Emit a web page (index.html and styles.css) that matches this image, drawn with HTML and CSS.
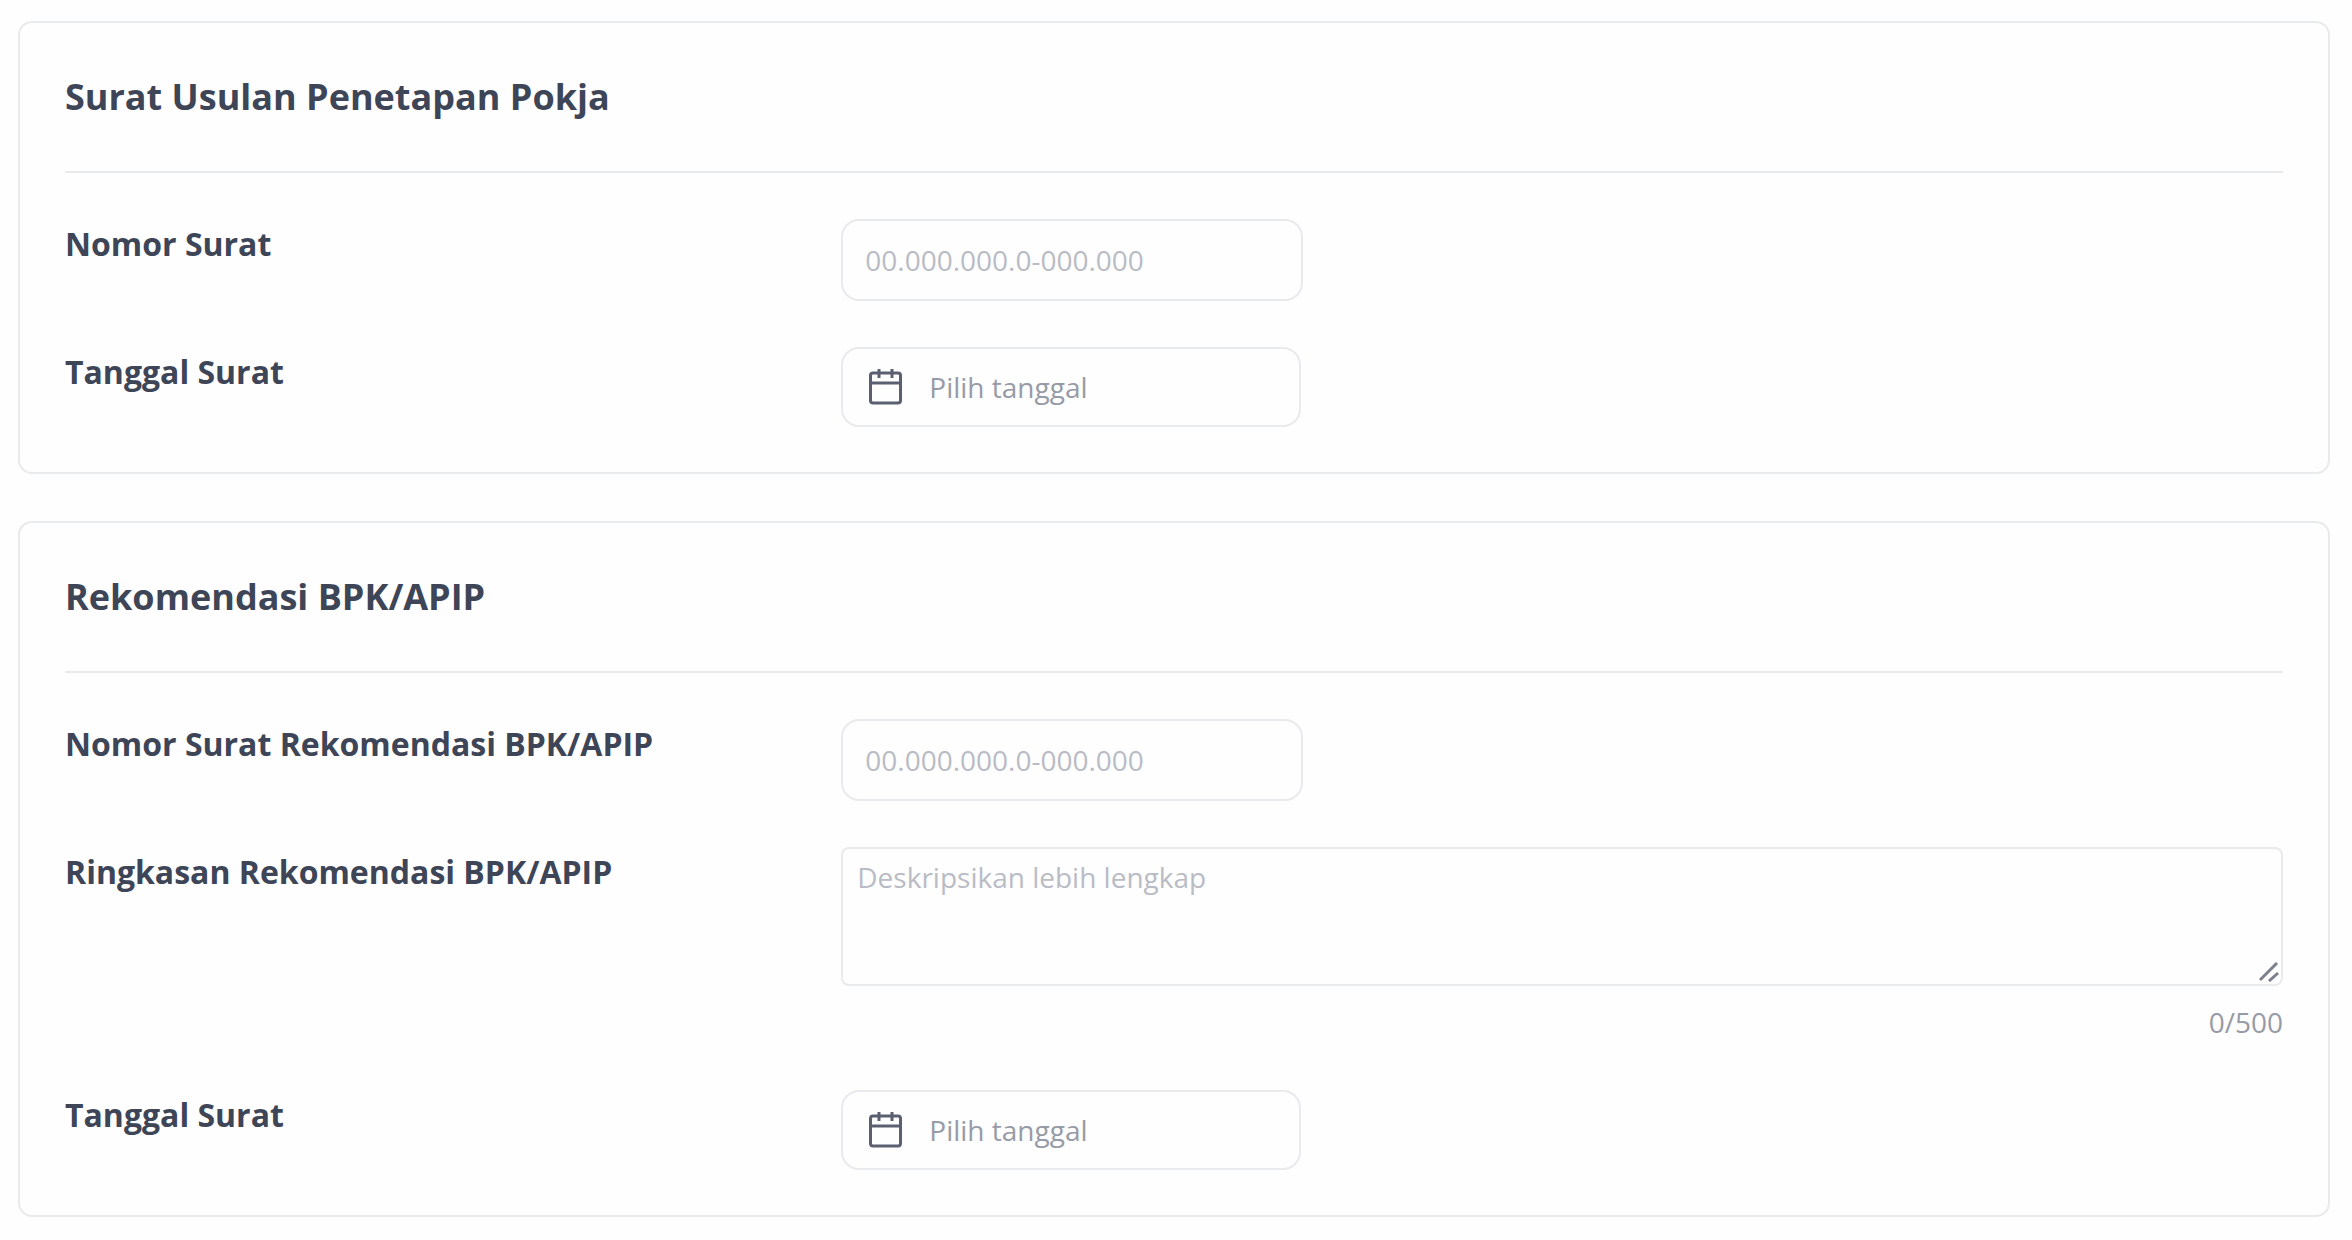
FILE: index.html
```html
<!DOCTYPE html>
<html lang="id">
<head>
    <meta charset="UTF-8">
    <meta name="viewport" content="width=device-width, initial-scale=1.0">
    <title>Penetapan Pokja</title>
    <link rel="stylesheet" href="styles.css">
</head>
<body>
    <form class="form">
        <section class="card">
            <h2 class="card-title">Surat Usulan Penetapan Pokja</h2>
            <div class="form-row">
                <label class="form-label" for="nomorSurat">Nomor Surat</label>
                <div class="form-field">
                    <input type="text" class="text-input" id="nomorSurat" placeholder="00.000.000.0-000.000">
                </div>
            </div>
            <div class="form-row">
                <label class="form-label" for="tanggalSurat">Tanggal Surat</label>
                <div class="form-field">
                    <div class="date-input">
                        <svg class="date-icon" viewBox="0 0 36 36" aria-hidden="true">
                            <rect x="3.5" y="4" width="30" height="30" rx="2.5"/>
                            <path d="M3.5 14h30M12 0v9M25 0v9"/>
                        </svg>
                        <input type="text" id="tanggalSurat" placeholder="Pilih tanggal">
                    </div>
                </div>
            </div>
        </section>

        <section class="card">
            <h2 class="card-title">Rekomendasi BPK/APIP</h2>
            <div class="form-row">
                <label class="form-label" for="nomorRekomendasi">Nomor Surat Rekomendasi BPK/APIP</label>
                <div class="form-field">
                    <input type="text" class="text-input" id="nomorRekomendasi" placeholder="00.000.000.0-000.000">
                </div>
            </div>
            <div class="form-row">
                <label class="form-label" for="ringkasan">Ringkasan Rekomendasi BPK/APIP</label>
                <div class="form-field">
                    <div class="textarea-wrap">
                        <textarea id="ringkasan" maxlength="500" placeholder="Deskripsikan lebih lengkap"></textarea>
                        <svg class="resize-icon" viewBox="0 0 20 20" aria-hidden="true">
                            <path d="M1 18L18 1M10 19L19 11"/>
                        </svg>
                    </div>
                    <p class="counter">0/500</p>
                </div>
            </div>
            <div class="form-row">
                <label class="form-label" for="tanggalRekomendasi">Tanggal Surat</label>
                <div class="form-field">
                    <div class="date-input">
                        <svg class="date-icon" viewBox="0 0 36 36" aria-hidden="true">
                            <rect x="3.5" y="4" width="30" height="30" rx="2.5"/>
                            <path d="M3.5 14h30M12 0v9M25 0v9"/>
                        </svg>
                        <input type="text" id="tanggalRekomendasi" placeholder="Pilih tanggal">
                    </div>
                </div>
            </div>
        </section>
    </form>
</body>
</html>
```

FILE: styles.css
```css
* {
    box-sizing: border-box;
}
body {
    margin: 0;
    padding: 21px 22px 21px 18px;
    font-family: "Open Sans", sans-serif;
    font-size: 28px;
    line-height: 40px;
    color: #3d4557;
    background-color: #fefefe;
}
.form {
    display: flex;
    flex-direction: column;
    gap: 47px;
}
.card {
    display: flex;
    flex-direction: column;
    gap: 46px;
    padding: 45px;
    border: 2px solid #e9eaec;
    border-radius: 14px;
}
.card-title {
    margin: 0;
    padding: 5px 0 50px;
    border-bottom: 2px solid #e9eaec;
    font-size: 36px;
    line-height: 48px;
    font-weight: 700;
}
.form-row {
    display: grid;
    grid-template-columns: 35% 1fr;
}
.form-label {
    padding-top: 5px;
    font-size: 32px;
    font-weight: 700;
}
input, textarea {
    font-family: inherit;
    font-size: 28px;
    line-height: 40px;
    color: #3d4557;
    background: none;
}
input::placeholder, textarea::placeholder {
    color: #b9bcc5;
    opacity: 1;
}
.text-input {
    display: block;
    width: 100%;
    max-width: 462px;
    height: 82px;
    padding: 0 22px;
    border: 2px solid #e9eaee;
    border-radius: 18px;
}
.date-input {
    display: flex;
    align-items: center;
    gap: 26px;
    max-width: 460px;
    height: 80px;
    padding: 0 24px;
    border: 2px solid #e9eaee;
    border-radius: 18px;
}
.date-input input {
    flex: 1;
    min-width: 0;
    padding: 0;
    border: none;
}
.date-input input::placeholder {
    color: #979ba7;
}
.date-icon {
    width: 36px;
    height: 36px;
    fill: none;
    stroke: #5a6070;
    stroke-width: 3;
}
.textarea-wrap {
    position: relative;
}
textarea {
    display: block;
    width: 100%;
    height: 139px;
    padding: 8px 14px;
    border: 2px solid #e9eaec;
    border-radius: 8px;
    resize: none;
}
.resize-icon {
    position: absolute;
    right: 4px;
    bottom: 4px;
    width: 20px;
    height: 20px;
    fill: none;
    stroke: #7b808c;
    stroke-width: 3;
}
.counter {
    margin: 16px 0 2px;
    text-align: right;
    color: #979ba7;
}
```
